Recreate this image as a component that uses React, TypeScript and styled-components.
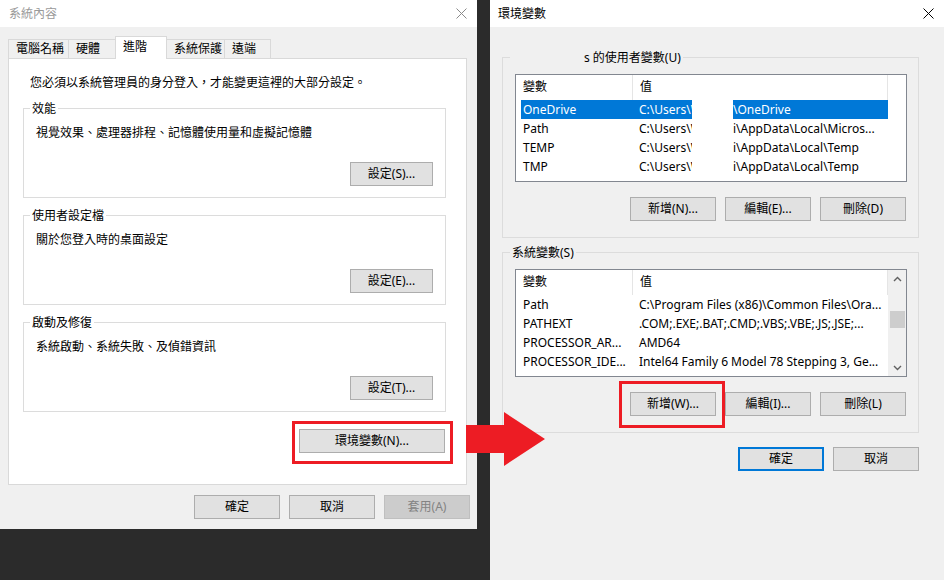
import React from "react";
import styled, { createGlobalStyle, css } from "styled-components";

const GlobalStyle = createGlobalStyle`
  html, body {
    margin: 0;
    padding: 0;
    background: #2b2b2b;
  }
  body {
    font-family: "Noto Sans", "Noto Sans CJK TC", sans-serif;
    font-size: 12px;
    color: #000;
  }
`;

const Screen = styled.div`
  position: relative;
  width: 944px;
  height: 580px;
  overflow: hidden;
  display: flex;
  align-items: flex-start;
  gap: 13px;
  background: #2b2b2b;
`;

const Window = styled.div<{ $w: number; $h: number }>`
  width: ${(p) => p.$w}px;
  height: ${(p) => p.$h}px;
  flex-shrink: 0;
  background: #f0f0f0;
  display: flex;
  flex-direction: column;
`;

const TitleBar = styled.div<{ $inactive?: boolean }>`
  height: 27px;
  flex-shrink: 0;
  box-sizing: border-box;
  background: #fff;
  display: flex;
  align-items: center;
  justify-content: space-between;
  color: ${(p) => (p.$inactive ? "#9a9a9a" : "#000")};
  line-height: 17px;
`;

const TitleText = styled.span<{ $left: number }>`
  padding-left: ${(p) => p.$left}px;
`;

const CloseBox = styled.span`
  display: flex;
  padding-right: 10px;
`;

const CloseIcon: React.FC<{ color: string }> = ({ color }) => (
  <CloseBox>
    <svg width="11" height="11" viewBox="0 0 11 11">
      <path d="M0.5 0.5L10.5 10.5M10.5 0.5L0.5 10.5" stroke={color} strokeWidth="1" />
    </svg>
  </CloseBox>
);

/* ---------- tabs (left dialog) ---------- */

const TabStrip = styled.div`
  display: flex;
  align-items: flex-end;
  height: 22px;
  margin: 9px 0 0 8px;
  position: relative;
  z-index: 1;
`;

const Tab = styled.div<{ $w: number; $active?: boolean }>`
  box-sizing: border-box;
  width: ${(p) => p.$w}px;
  margin-right: -1px;
  padding-left: 7px;
  border: 1px solid #d9d9d9;
  border-bottom: none;
  white-space: nowrap;
  ${(p) =>
    p.$active
      ? css`
          height: 23px;
          margin-bottom: -1px;
          background: #fff;
          line-height: 20px;
        `
      : css`
          height: 19px;
          background: #f0f0f0;
          line-height: 18px;
        `}
`;

const TabPanel = styled.div`
  flex: 1;
  margin: 0 10px 0 8px;
  box-sizing: border-box;
  background: #fff;
  border: 1px solid #d9d9d9;
  padding: 15px 20px 0 14px;
  display: flex;
  flex-direction: column;
`;

const Intro = styled.div`
  line-height: 17px;
  margin: 0 0 9px 7px;
  white-space: nowrap;
`;

/* ---------- group boxes ---------- */

const Group = styled.fieldset<{ $top?: number; $pr?: number; $pb?: number }>`
  margin: ${(p) => p.$top ?? 0}px 0 0 0;
  min-width: 0;
  border: 1px solid #dcdcdc;
  padding: 0 ${(p) => p.$pr ?? 12}px ${(p) => p.$pb ?? 11}px 12px;
  display: flex;
  flex-direction: column;
`;

const Legend = styled.legend<{ $shift: number }>`
  padding: 0 2px;
  margin-left: ${(p) => p.$shift}px;
  line-height: 17px;
  white-space: nowrap;
`;

const Redacted = styled.span<{ $w: number }>`
  display: inline-block;
  width: ${(p) => p.$w}px;
`;

const GroupText = styled.div`
  line-height: 17px;
  margin-top: 7px;
  white-space: nowrap;
`;

const ButtonRow = styled.div<{ $top: number; $gap?: number; $right?: number }>`
  display: flex;
  justify-content: flex-end;
  gap: ${(p) => p.$gap ?? 9}px;
  margin-top: ${(p) => p.$top}px;
  margin-right: ${(p) => p.$right ?? 0}px;
`;

const Button = styled.button<{ $w: number; $focus?: boolean }>`
  box-sizing: border-box;
  width: ${(p) => p.$w}px;
  height: 24px;
  margin: 0;
  padding: 0;
  font: inherit;
  line-height: 20px;
  color: #000;
  background: #e1e1e1;
  border: 1px solid #adadad;
  white-space: nowrap;
  ${(p) =>
    p.$focus &&
    css`
      border: 2px solid #0078d7;
    `}
  &:disabled {
    background: #cccccc;
    border-color: #bfbfbf;
    color: #838383;
  }
`;

const Marked = styled.div<{ $t: number; $r: number; $b: number; $l: number }>`
  position: relative;
  display: flex;
  &::after {
    content: "";
    position: absolute;
    top: -${(p) => p.$t}px;
    right: -${(p) => p.$r}px;
    bottom: -${(p) => p.$b}px;
    left: -${(p) => p.$l}px;
    border: 3px solid #ed1c24;
    pointer-events: none;
  }
`;

const DialogFooter = styled.div<{ $pt: number; $pr: number; $pb: number }>`
  display: flex;
  justify-content: flex-end;
  gap: 9px;
  padding: ${(p) => p.$pt}px ${(p) => p.$pr}px ${(p) => p.$pb}px 0;
`;

/* ---------- environment variables dialog ---------- */

const EnvBody = styled.div`
  padding: 22px 25px 0 12px;
  display: flex;
  flex-direction: column;
`;

const ListBox = styled.div`
  box-sizing: border-box;
  height: 108px;
  margin-top: 8px;
  border: 1px solid #828790;
  background: #fff;
  display: flex;
  overflow: hidden;
`;

const ListContent = styled.div`
  flex: 1;
  min-width: 0;
`;

const HeaderRow = styled.div`
  display: flex;
  height: 25px;
`;

const HeaderCell = styled.div<{ $w?: number }>`
  box-sizing: border-box;
  ${(p) => (p.$w ? `width: ${p.$w}px;` : "flex: 1;")}
  padding-left: 7px;
  line-height: 24px;
  border-right: 1px solid #e5e5e5;
`;

const Row = styled.div<{ $selected?: boolean }>`
  display: flex;
  height: 19px;
  margin-left: 5px;
  line-height: 19px;
  white-space: nowrap;
  background: ${(p) => (p.$selected ? "#0078d7" : "transparent")};
  color: ${(p) => (p.$selected ? "#fff" : "#000")};
`;

const NameCell = styled.div`
  box-sizing: border-box;
  width: 116px;
  padding-left: 2px;
  overflow: hidden;
`;

const ValueCell = styled.div`
  flex: 1;
  min-width: 0;
  padding-left: 2px;
  overflow: hidden;
`;

const Clip = styled.span`
  display: inline-block;
  width: 53px;
  overflow: hidden;
  vertical-align: top;
`;

const Blank = styled.span`
  display: inline-block;
  width: 41px;
  height: 19px;
  background: #fff;
  vertical-align: top;
`;

const ScrollColumn = styled.div<{ $bar?: boolean }>`
  width: 18px;
  flex-shrink: 0;
  display: flex;
  flex-direction: column;
  align-items: center;
  background: ${(p) => (p.$bar ? "#f0f0f0" : "#fff")};
`;

const ScrollArrow = styled.div`
  height: 17px;
  width: 100%;
  display: flex;
  align-items: center;
  justify-content: center;
`;

const ScrollTrack = styled.div`
  flex: 1;
  width: 100%;
  display: flex;
  justify-content: center;
`;

const Thumb = styled.div`
  width: 15px;
  height: 17px;
  margin-top: 24px;
  background: #cdcdcd;
`;

const Chevron: React.FC<{ up?: boolean }> = ({ up }) => (
  <svg width="9" height="6" viewBox="0 0 9 6">
    <polyline
      points={up ? "1,5 4.5,1.5 8,5" : "1,1 4.5,4.5 8,1"}
      fill="none"
      stroke="#606060"
      strokeWidth="1.4"
    />
  </svg>
);

const ArrowOverlay = styled.svg`
  position: absolute;
  left: 466px;
  top: 412px;
`;

type Variable = { name: string; value: React.ReactNode; selected?: boolean };

const userVars: Variable[] = [
  {
    name: "OneDrive",
    selected: true,
    value: (
      <>
        <Clip>C:\Users\W</Clip>
        <Blank />
        \OneDrive
      </>
    ),
  },
  {
    name: "Path",
    value: (
      <>
        <Clip>C:\Users\W</Clip>
        <Blank />
        i\AppData\Local\Micros...
      </>
    ),
  },
  {
    name: "TEMP",
    value: (
      <>
        <Clip>C:\Users\W</Clip>
        <Blank />
        i\AppData\Local\Temp
      </>
    ),
  },
  {
    name: "TMP",
    value: (
      <>
        <Clip>C:\Users\W</Clip>
        <Blank />
        i\AppData\Local\Temp
      </>
    ),
  },
];

const systemVars: Variable[] = [
  { name: "Path", value: "C:\\Program Files (x86)\\Common Files\\Ora..." },
  { name: "PATHEXT", value: ".COM;.EXE;.BAT;.CMD;.VBS;.VBE;.JS;.JSE;..." },
  { name: "PROCESSOR_AR...", value: "AMD64" },
  { name: "PROCESSOR_IDE...", value: "Intel64 Family 6 Model 78 Stepping 3, Ge..." },
];

const VariableList: React.FC<{ items: Variable[]; scroll?: boolean }> = ({ items, scroll }) => (
  <ListBox>
    <ListContent>
      <HeaderRow>
        <HeaderCell $w={117}>變數</HeaderCell>
        <HeaderCell>值</HeaderCell>
      </HeaderRow>
      {items.map((v) => (
        <Row key={v.name} $selected={v.selected}>
          <NameCell>{v.name}</NameCell>
          <ValueCell>{v.value}</ValueCell>
        </Row>
      ))}
    </ListContent>
    <ScrollColumn $bar={scroll}>
      {scroll && (
        <>
          <ScrollArrow>
            <Chevron up />
          </ScrollArrow>
          <ScrollTrack>
            <Thumb />
          </ScrollTrack>
          <ScrollArrow>
            <Chevron />
          </ScrollArrow>
        </>
      )}
    </ScrollColumn>
  </ListBox>
);

const SettingsGroup: React.FC<{ title: string; text: string; button: string; top?: number }> = ({
  title,
  text,
  button,
  top,
}) => (
  <Group $top={top}>
    <Legend $shift={-6}>{title}</Legend>
    <GroupText>{text}</GroupText>
    <ButtonRow $top={21}>
      <Button $w={83}>{button}</Button>
    </ButtonRow>
  </Group>
);

const SystemProperties: React.FC = () => (
  <Window $w={477} $h={529}>
    <TitleBar $inactive>
      <TitleText $left={9}>系統內容</TitleText>
      <CloseIcon color="#8a8a8a" />
    </TitleBar>
    <TabStrip>
      <Tab $w={61}>電腦名稱</Tab>
      <Tab $w={48}>硬體</Tab>
      <Tab $w={52} $active>
        進階
      </Tab>
      <Tab $w={59}>系統保護</Tab>
      <Tab $w={47}>遠端</Tab>
    </TabStrip>
    <TabPanel>
      <Intro>您必須以系統管理員的身分登入，才能變更這裡的大部分設定。</Intro>
      <SettingsGroup title="效能" text="視覺效果、處理器排程、記憶體使用量和虛擬記憶體" button="設定(S)..." />
      <SettingsGroup title="使用者設定檔" text="關於您登入時的桌面設定" button="設定(E)..." top={9} />
      <SettingsGroup title="啟動及修復" text="系統啟動、系統失敗、及偵錯資訊" button="設定(T)..." top={9} />
      <ButtonRow $top={17} $right={1}>
        <Marked $t={8} $r={8} $b={11} $l={7}>
          <Button $w={146}>環境變數(N)...</Button>
        </Marked>
      </ButtonRow>
    </TabPanel>
    <DialogFooter $pt={10} $pr={7} $pb={10}>
      <Button $w={86}>確定</Button>
      <Button $w={86}>取消</Button>
      <Button $w={86} disabled>
        套用(A)
      </Button>
    </DialogFooter>
  </Window>
);

const EnvironmentVariables: React.FC = () => (
  <Window $w={454} $h={580}>
    <TitleBar>
      <TitleText $left={8}>環境變數</TitleText>
      <CloseIcon color="#000" />
    </TitleBar>
    <EnvBody>
      <Group $pr={11} $pb={16}>
        <Legend $shift={-5}>
          <Redacted $w={72} />s 的使用者變數(U)
        </Legend>
        <VariableList items={userVars} />
        <ButtonRow $top={15} $right={1}>
          <Button $w={86}>新增(N)...</Button>
          <Button $w={86}>編輯(E)...</Button>
          <Button $w={86}>刪除(D)</Button>
        </ButtonRow>
      </Group>
      <Group $top={6} $pr={11} $pb={16}>
        <Legend $shift={-5}>系統變數(S)</Legend>
        <VariableList items={systemVars} scroll />
        <ButtonRow $top={15} $right={1}>
          <Marked $t={11} $r={9} $b={12} $l={11}>
            <Button $w={86}>新增(W)...</Button>
          </Marked>
          <Button $w={86}>編輯(I)...</Button>
          <Button $w={86}>刪除(L)</Button>
        </ButtonRow>
      </Group>
      <DialogFooter $pt={14} $pr={0} $pb={0}>
        <Button $w={86} $focus>
          確定
        </Button>
        <Button $w={86}>取消</Button>
      </DialogFooter>
    </EnvBody>
  </Window>
);

export default function App() {
  return (
    <>
      <GlobalStyle />
      <Screen>
        <SystemProperties />
        <EnvironmentVariables />
        <ArrowOverlay width="79" height="54" viewBox="0 0 79 54">
          <polygon points="0,13 38,13 38,0 79,27 38,54 38,41 0,41" fill="#ed1c24" />
        </ArrowOverlay>
      </Screen>
    </>
  );
}
